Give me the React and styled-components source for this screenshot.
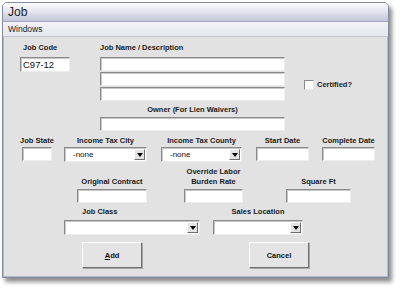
import styled, { createGlobalStyle } from "styled-components";

const Global = createGlobalStyle`
  html, body {
    margin: 0;
    padding: 0;
    background: #ffffff;
  }
  * { box-sizing: border-box; }
`;

const Page = styled.div`
  width: 400px;
  height: 291px;
  padding: 2px 0 0 2px;
  font-family: "Liberation Sans", Arial, sans-serif;
`;

const Window = styled.div`
  width: 387px;
  height: 276px;
  display: flex;
  flex-direction: column;
  border: 1px solid #868aa3;
  border-radius: 5px 5px 0 0;
  background: #e2e2e2;
  box-shadow: 3px 4px 4px rgba(0, 0, 0, 0.45);
  overflow: hidden;
`;

const TitleBar = styled.div`
  height: 19px;
  flex: none;
  display: flex;
  align-items: center;
  padding-left: 5px;
  font-size: 12px;
  color: #1c1c1c;
  background: linear-gradient(#fbfbfe 0%, #e6e6f0 45%, #cfd0e0 80%, #c4c5d8 100%);
  border-bottom: 1px solid #a3a5bb;
`;

const MenuBar = styled.div`
  height: 15px;
  flex: none;
  display: flex;
  align-items: center;
  padding-left: 5px;
  font-size: 8.5px;
  color: #222;
  background: linear-gradient(#f1f1f6, #e6e6ee);
  border-bottom: 1px solid #c3c5d4;
`;

const Body = styled.div`
  flex: 1;
  display: flex;
  flex-direction: column;
  border: 1px solid #b4b6c9;
  border-top: none;
`;

const Row = styled.div`
  display: flex;
  align-items: ${(p) => p.$align || "flex-start"};
  margin-top: ${(p) => p.$top}px;
  padding-left: ${(p) => p.$left}px;
  gap: ${(p) => p.$gap || 0}px;
`;

const Field = styled.div`
  width: ${(p) => p.$w}px;
  flex: none;
  display: flex;
  flex-direction: column;
  align-items: ${(p) => (p.$start ? "flex-start" : "center")};
  gap: ${(p) => p.$gap ?? 2}px;
`;

const Label = styled.div`
  font-size: 7.5px;
  font-weight: bold;
  line-height: 10px;
  color: #1a1a1a;
  white-space: nowrap;
  text-align: center;
  padding-left: ${(p) => p.$indent || 0}px;
`;

const Input = styled.div`
  width: ${(p) => p.$w}px;
  height: ${(p) => p.$h || 14}px;
  background: #ffffff;
  border: 1px solid;
  border-color: #8a8a8a #ededed #ededed #8a8a8a;
  box-shadow: inset 1px 1px 0 #c8c8c8;
  font-size: 9.5px;
  color: #111;
  display: flex;
  align-items: center;
  padding-left: 2px;
`;

const Stack = styled.div`
  display: flex;
  flex-direction: column;
  gap: 1px;
`;

const Select = styled.div`
  width: ${(p) => p.$w}px;
  height: 15px;
  background: #ffffff;
  border: 1px solid;
  border-color: #8a8a8a #ededed #ededed #8a8a8a;
  box-shadow: inset 1px 1px 0 #c8c8c8;
  display: flex;
  align-items: center;
  justify-content: space-between;
  padding: 0 1px 0 8px;
  font-size: 8px;
  color: #111;
`;

const DropButton = styled.div`
  width: 11px;
  height: 11px;
  background: #e4e4e4;
  border: 1px solid;
  border-color: #ffffff #6e6e6e #6e6e6e #ffffff;
  display: flex;
  align-items: center;
  justify-content: center;
  &::after {
    content: "";
    margin-top: 1px;
    border-left: 3.5px solid transparent;
    border-right: 3.5px solid transparent;
    border-top: 4px solid #000;
  }
`;

const CheckRow = styled.div`
  display: flex;
  align-items: center;
  gap: 3px;
  margin-top: 37px;
`;

const CheckBox = styled.div`
  width: 10px;
  height: 10px;
  background: #ffffff;
  border: 1px solid;
  border-color: #8a8a8a #e8e8e8 #e8e8e8 #8a8a8a;
`;

const Button = styled.div`
  width: 60px;
  height: 26px;
  display: flex;
  align-items: center;
  justify-content: center;
  font-size: 7.5px;
  font-weight: bold;
  color: #111;
  background: #e4e4e4;
  border: 1px solid;
  border-color: #ffffff #6f6f6f #6f6f6f #ffffff;
  box-shadow: 1px 1px 0 #a8a8a8;
  u { text-decoration: underline; }
`;

const Dropdown = ({ w, value }) => (
  <Select $w={w}>
    <span>{value}</span>
    <DropButton />
  </Select>
);

export default function App() {
  return (
    <Page>
      <Global />
      <Window>
        <TitleBar>Job</TitleBar>
        <MenuBar>Windows</MenuBar>
        <Body>
          <Row $top={6} $left={16}>
            <Field $w={50} $start $gap={4}>
              <Label $indent={3}>Job Code</Label>
              <Input $w={50} $h={15}>C97-12</Input>
            </Field>
            <Field $w={185} $start $gap={4} style={{ marginLeft: 30 }}>
              <Label>Job Name / Description</Label>
              <Stack>
                <Input $w={185} />
                <Input $w={185} />
                <Input $w={185} />
              </Stack>
            </Field>
            <CheckRow style={{ marginLeft: 19 }}>
              <CheckBox />
              <Label>Certified?</Label>
            </CheckRow>
          </Row>

          <Row $top={4} $left={96}>
            <Field $w={185}>
              <Label>Owner (For Lien Waivers)</Label>
              <Input $w={185} />
            </Field>
          </Row>

          <Row $top={5} $left={10}>
            <Field $w={46} $gap={1}>
              <Label>Job State</Label>
              <Input $w={30} />
            </Field>
            <Field $w={83} $gap={1} style={{ marginLeft: 4 }}>
              <Label>Income Tax City</Label>
              <Dropdown w={83} value="-none" />
            </Field>
            <Field $w={81} $gap={1} style={{ marginLeft: 14 }}>
              <Label>Income Tax County</Label>
              <Dropdown w={81} value="-none" />
            </Field>
            <Field $w={53} $gap={1} style={{ marginLeft: 14 }}>
              <Label>Start Date</Label>
              <Input $w={53} />
            </Field>
            <Field $w={53} $gap={1} style={{ marginLeft: 13 }}>
              <Label>Complete Date</Label>
              <Input $w={53} />
            </Field>
          </Row>

          <Row $top={5} $left={73} $align="flex-end">
            <Field $w={70}>
              <Label>Original Contract</Label>
              <Input $w={70} />
            </Field>
            <Field $w={59} style={{ marginLeft: 37 }}>
              <Label>
                Override Labor
                <br />
                Burden Rate
              </Label>
              <Input $w={59} />
            </Field>
            <Field $w={65} style={{ marginLeft: 43 }}>
              <Label>Square Ft</Label>
              <Input $w={65} />
            </Field>
          </Row>

          <Row $top={4} $left={60} $gap={13}>
            <Field $w={136} $start $gap={3}>
              <Label $indent={18}>Job Class</Label>
              <Dropdown w={136} value="" />
            </Field>
            <Field $w={90} $gap={3}>
              <Label>Sales Location</Label>
              <Dropdown w={90} value="" />
            </Field>
          </Row>

          <Row $top={7} $left={78} $gap={107}>
            <Button>
              <span>
                <u>A</u>dd
              </span>
            </Button>
            <Button>Cancel</Button>
          </Row>
        </Body>
      </Window>
    </Page>
  );
}
